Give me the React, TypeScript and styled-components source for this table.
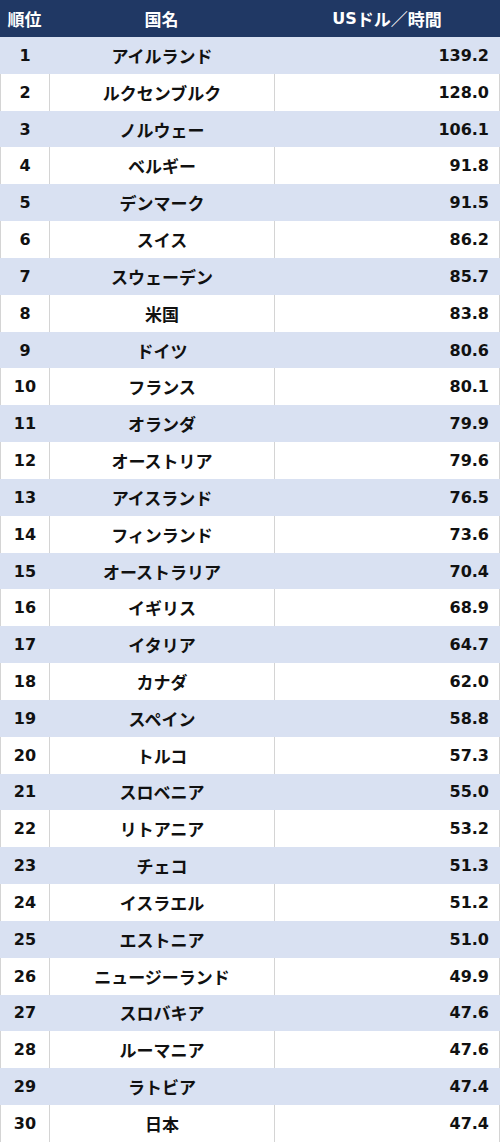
import React from "react";
import styled, { createGlobalStyle } from "styled-components";

const palette = {
  navy: "#203864",
  stripe: "#d9e1f2",
  line: "#d4d4d4",
  text: "#111111",
};

const GlobalStyle = createGlobalStyle`
  html, body {
    margin: 0;
    padding: 0;
    background: #ffffff;
  }
  body {
    font-family: "DejaVu Sans", "Noto Sans CJK JP", sans-serif;
  }
`;

const Table = styled.div`
  width: 500px;
  border-bottom: 1px solid ${palette.line};
  box-sizing: border-box;
`;

const HeaderRow = styled.div`
  display: grid;
  grid-template-columns: 49px 225px 1fr;
  height: 37px;
  background: ${palette.navy};
  color: #ffffff;
  font-weight: bold;
  font-size: 16px;
`;

const HeaderCell = styled.div`
  display: flex;
  align-items: center;
  justify-content: center;
  font-family: "DejaVu Sans", "Noto Sans CJK JP", sans-serif;

  .cjk {
    font-size: 17px;
  }
`;

const Row = styled.div<{ $striped: boolean }>`
  display: grid;
  grid-template-columns: 49px 225px 1fr;
  height: 36.83px;
  background: ${({ $striped }) => ($striped ? palette.stripe : "#ffffff")};
  color: ${palette.text};
  font-weight: bold;
`;

const Cell = styled.div<{ $striped: boolean; $align?: "center" | "right" }>`
  display: flex;
  align-items: center;
  justify-content: ${({ $align }) =>
    $align === "right" ? "flex-end" : "center"};
  padding-right: ${({ $align }) => ($align === "right" ? "10px" : "0")};
  border-left: 1px solid
    ${({ $striped }) => ($striped ? palette.stripe : palette.line)};
  font-size: 16px;
  box-sizing: border-box;

  &:last-child {
    border-right: 1px solid
      ${({ $striped }) => ($striped ? palette.stripe : palette.line)};
  }
`;

const NameCell = styled(Cell)`
  font-family: "Noto Sans CJK JP", sans-serif;
  font-size: 17px;
`;

const rows: [string, string][] = [
  ["アイルランド", "139.2"],
  ["ルクセンブルク", "128.0"],
  ["ノルウェー", "106.1"],
  ["ベルギー", "91.8"],
  ["デンマーク", "91.5"],
  ["スイス", "86.2"],
  ["スウェーデン", "85.7"],
  ["米国", "83.8"],
  ["ドイツ", "80.6"],
  ["フランス", "80.1"],
  ["オランダ", "79.9"],
  ["オーストリア", "79.6"],
  ["アイスランド", "76.5"],
  ["フィンランド", "73.6"],
  ["オーストラリア", "70.4"],
  ["イギリス", "68.9"],
  ["イタリア", "64.7"],
  ["カナダ", "62.0"],
  ["スペイン", "58.8"],
  ["トルコ", "57.3"],
  ["スロベニア", "55.0"],
  ["リトアニア", "53.2"],
  ["チェコ", "51.3"],
  ["イスラエル", "51.2"],
  ["エストニア", "51.0"],
  ["ニュージーランド", "49.9"],
  ["スロバキア", "47.6"],
  ["ルーマニア", "47.6"],
  ["ラトビア", "47.4"],
  ["日本", "47.4"],
];

const App: React.FC = () => {
  return (
    <>
      <GlobalStyle />
      <Table>
        <HeaderRow>
          <HeaderCell>
            <span className="cjk">順位</span>
          </HeaderCell>
          <HeaderCell>
            <span className="cjk">国名</span>
          </HeaderCell>
          <HeaderCell>
            US<span className="cjk">ドル／時間</span>
          </HeaderCell>
        </HeaderRow>
        {rows.map(([name, value], index) => {
          const striped = index % 2 === 0;
          return (
            <Row key={name} $striped={striped}>
              <Cell $striped={striped}>{index + 1}</Cell>
              <NameCell $striped={striped}>{name}</NameCell>
              <Cell $striped={striped} $align="right">
                {value}
              </Cell>
            </Row>
          );
        })}
      </Table>
    </>
  );
};

export default App;
